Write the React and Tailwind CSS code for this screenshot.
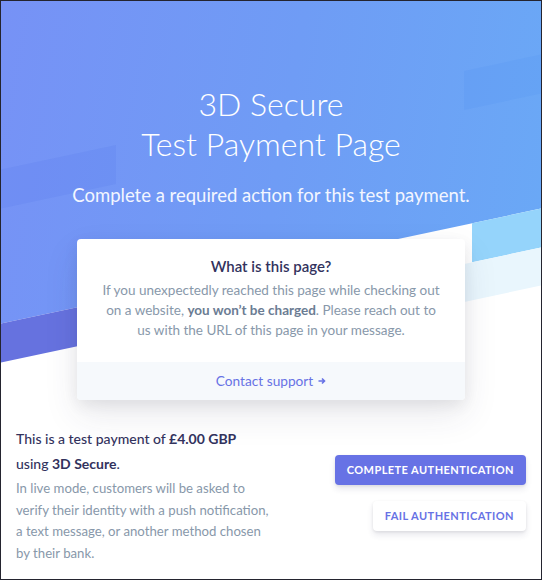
export default function App() {
  return (
    <div className="relative h-[580px] w-[542px] overflow-hidden border border-[#24242f] bg-white font-['Lato',sans-serif]">
      {/* skewed backdrop with stripes */}
      <div className="absolute inset-x-0 top-[-200px] flex h-[542px] -skew-y-12 flex-col">
        <div className="flex flex-1 flex-col justify-end bg-[linear-gradient(100deg,#7791f6,#6f9cf5_55%,#6aa8f6)]">
          <div className="flex h-[38.5px] justify-between">
            <div className="w-[115px] bg-[#3f66e6]/10" />
            <div className="w-[77px] bg-[#4c8ef0]/15" />
          </div>
          <div className="h-[115.5px]" />
        </div>
        <div className="flex h-[38.5px] justify-between">
          <div className="w-[300px] bg-[#6672df]" />
          <div className="w-[69px] bg-[#95d4fb]" />
        </div>
        <div className="flex h-[38.5px] justify-end">
          <div className="w-[92px] bg-[#e9f6fd]" />
        </div>
      </div>

      <div className="relative flex flex-col items-center pt-[83px]">
        <h1 className="text-center text-[32px] leading-[40px] font-light text-white">
          3D Secure
          <br />
          Test Payment Page
        </h1>
        <p className="mt-[18px] text-[18.5px] leading-[26px] text-[#f3f6ff]">
          Complete a required action for this test payment.
        </p>

        <div className="mt-[31px] w-[388px] overflow-hidden rounded-[4px] bg-white shadow-[0_15px_35px_rgba(50,50,93,0.1),0_5px_15px_rgba(0,0,0,0.07)]">
          <div className="px-6 pt-[15px] pb-[22px] text-center">
            <h2 className="text-[15px] leading-[24px] font-semibold text-[#32325d]">What is this page?</h2>
            <p className="mt-[2px] text-[13.5px] leading-[20px] text-[#8898aa]">
              If you unexpectedly reached this page while checking out on a website,{' '}
              <span className="font-bold text-[#6b7c93]">you won’t be charged</span>. Please reach out to us with the
              URL of this page in your message.
            </p>
          </div>
          <div className="flex h-[38px] items-center justify-center gap-[5px] bg-[#f6f9fc] text-[13.7px] text-[#6772e5]">
            Contact support
            <svg width="8" height="8" viewBox="0 0 8 8" fill="none">
              <path d="M0.5 4h6M4 1.5L6.5 4 4 6.5" stroke="#6772e5" strokeWidth="1.6" />
            </svg>
          </div>
        </div>
      </div>

      <div className="relative flex items-start justify-between px-[15px] pt-[26px]">
        <div className="w-[254px]">
          <p className="text-[14px] leading-[25px] font-medium text-[#32325d]">
            This is a test payment of <span className="font-bold">£4.00 GBP</span>
            <br />
            using <span className="font-bold">3D Secure</span>.
          </p>
          <p className="mt-[2px] text-[13.2px] leading-[21.5px] text-[#8898aa]">
            In live mode, customers will be asked to verify their identity with a push notification, a text message,
            or another method chosen by their bank.
          </p>
        </div>
        <div className="flex flex-col items-end gap-4 pt-[29px]">
          <button className="h-[30px] rounded-[4px] bg-[#6772e5] px-[12px] text-[11px] font-bold tracking-[0.04em] text-white uppercase shadow-[0_4px_6px_rgba(50,50,93,0.11),0_1px_3px_rgba(0,0,0,0.08)]">
            Complete authentication
          </button>
          <button className="h-[30px] rounded-[4px] bg-white px-[12px] text-[11px] font-bold tracking-[0.04em] text-[#6772e5] uppercase shadow-[0_4px_6px_rgba(50,50,93,0.11),0_1px_3px_rgba(0,0,0,0.08)]">
            Fail authentication
          </button>
        </div>
      </div>
    </div>
  );
}
